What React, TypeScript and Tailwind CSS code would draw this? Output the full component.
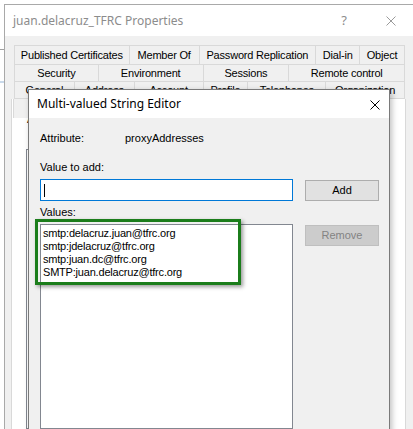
const TAB_ROWS: { label: string; w: number }[][] = [
  [
    { label: 'Published Certificates', w: 115 },
    { label: 'Member Of', w: 70 },
    { label: 'Password Replication', w: 117 },
    { label: 'Dial-in', w: 44 },
    { label: 'Object', w: 45 },
  ],
  [
    { label: 'Security', w: 84 },
    { label: 'Environment', w: 105 },
    { label: 'Sessions', w: 86 },
    { label: 'Remote control', w: 116 },
  ],
  [
    { label: 'General', w: 60 },
    { label: 'Address', w: 60 },
    { label: 'Account', w: 69 },
    { label: 'Profile', w: 45 },
    { label: 'Telephones', w: 78 },
    { label: 'Organization', w: 79 },
  ],
]

const ROW_HEIGHTS = ['h-[19px]', 'h-[17px]', 'h-[17px]']

const VALUES = [
  'smtp:delacruz.juan@tfrc.org',
  'smtp:jdelacruz@tfrc.org',
  'smtp:juan.dc@tfrc.org',
  'SMTP:juan.delacruz@tfrc.org',
]

function CloseGlyph({ className }: { className?: string }) {
  return (
    <svg viewBox="0 0 10 10" className={className} fill="none" stroke="currentColor" strokeWidth="1">
      <path d="M0.5 0.5 L9.5 9.5 M9.5 0.5 L0.5 9.5" />
    </svg>
  )
}

/** Properties window behind, with the Multi-valued String Editor on top */
export default function App() {
  return (
    <div className="relative h-[429px] w-[413px] overflow-hidden bg-white font-['Liberation_Sans',Arial,sans-serif] text-[11px] text-black">
      {/* sliver of another window at the far left */}
      <div className="absolute left-0 top-[49px] h-px w-[4px] bg-[#a0a0a0]" />
      <div className="absolute left-0 top-[81px] h-[2px] w-[4px] bg-[#c9d9ea]" />

      {/* juan.delacruz_TFRC Properties */}
      <div className="absolute left-[4px] top-[4px] flex h-[440px] w-[420px] flex-col border-l border-t border-[#a9a9a9] bg-[#f0f0f0]">
        <div className="flex h-[31px] shrink-0 items-center bg-white pl-[8px] font-['Noto_Sans',sans-serif] text-[12px] text-[#8c8c8c]">
          <span>juan.delacruz_TFRC Properties</span>
          <span className="ml-auto mr-[77px] text-[13px]">?</span>
        </div>
        <CloseGlyph className="absolute left-[381px] top-[11px] h-[10px] w-[10px] text-[#9a9a9a]" />

        <div className="flex flex-col pl-[6px] pt-[9px]">
          <div className="ml-[3px] flex w-[391px] flex-col border-l border-t border-[#d9d9d9]">
            {TAB_ROWS.map((row, i) => (
              <div key={i} className={`flex ${ROW_HEIGHTS[i]}`}>
                {row.map((t) => (
                  <div
                    key={t.label}
                    style={{ width: t.w }}
                    className="flex items-center justify-center whitespace-nowrap border-b border-r border-[#d9d9d9] tracking-[-0.2px]"
                  >
                    {t.label}
                  </div>
                ))}
              </div>
            ))}
          </div>

          {/* tab page */}
          <div className="relative h-[340px] w-[395px] border-l border-r border-[#d9d9d9] bg-white">
            <div className="absolute left-[1px] top-0 h-[19px] w-[17px] border-l border-[#d9d9d9] bg-[#f0f0f0]" />
            <span className="absolute left-[15px] top-[12px]">A</span>
            <div className="absolute left-[14px] top-[50px] h-[280px] w-[360px] border border-[#828790]" />
          </div>
        </div>
      </div>

      {/* Multi-valued String Editor */}
      <div className="absolute left-[28px] top-[89px] flex h-[360px] w-[362px] flex-col border border-[#7a7a7a] bg-[#f0f0f0] shadow-[2px_2px_6px_rgba(0,0,0,0.25)]">
        <div className="relative flex h-[28px] shrink-0 items-center bg-white pl-[8px] font-['Noto_Sans',sans-serif] text-[12px]">
          Multi-valued String Editor
          <CloseGlyph className="absolute left-[341px] top-[10px] h-[10px] w-[10px]" />
        </div>

        <div className="flex flex-col pl-[11px]">
          <div className="mt-[14px] flex h-[13px] items-center">
            <span className="w-[85px]">Attribute:</span>
            <span>proxyAddresses</span>
          </div>

          <div className="mt-[16px] flex h-[13px] items-center">Value to add:</div>

          <div className="mt-[5px] flex items-start gap-[12px]">
            <div className="flex h-[22px] w-[253px] items-center border border-[#0078d7] bg-white pl-[3px]">
              <span className="h-[13px] w-px bg-black" />
            </div>
            <button
              type="button"
              className="mt-px flex h-[21px] w-[74px] items-center justify-center border border-[#adadad] bg-[#e1e1e1]"
            >
              Add
            </button>
          </div>

          <div className="mt-[5px] flex h-[13px] items-center">Values:</div>

          <div className="mt-[5px] flex items-start gap-[12px]">
            <div className="flex h-[205px] w-[253px] flex-col border border-[#828790] bg-white pl-[2px] pt-[2px] tracking-[-0.2px]">
              {VALUES.map((v) => (
                <div key={v} className="flex h-[13px] items-center whitespace-nowrap">
                  {v}
                </div>
              ))}
            </div>
            <button
              type="button"
              disabled
              className="mt-px flex h-[21px] w-[74px] items-center justify-center border border-[#bfbfbf] bg-[#cccccc] text-[#838383]"
            >
              Remove
            </button>
          </div>
        </div>
      </div>

      {/* green highlight drawn over the values */}
      <div className="absolute left-[35px] top-[219px] h-[66px] w-[206px] border-[3px] border-[#1b7d1b] shadow-[2px_2px_4px_rgba(0,0,0,0.4)]" />
    </div>
  )
}
